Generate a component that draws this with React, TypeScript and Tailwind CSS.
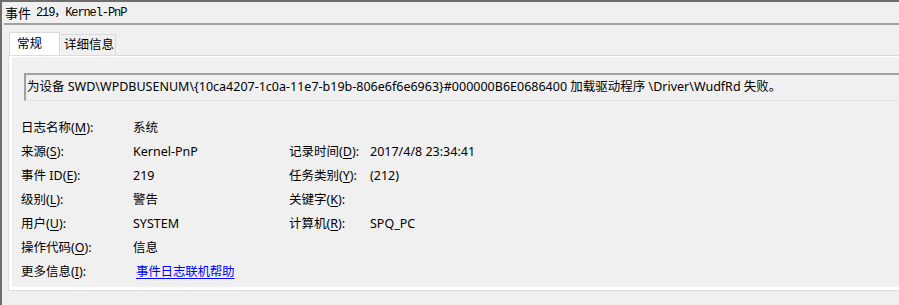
import React from "react";

const cjk = { fontFamily: '"Segoe UI", "Noto Sans", "Noto Sans CJK SC", sans-serif' };

const DESC =
  "为设备 SWD\\WPDBUSENUM\\{10ca4207-1c0a-11e7-b19b-806e6f6e6963}#000000B6E0686400 加载驱动程序 \\Driver\\WudfRd 失败。";

function L({ text, k }: { text: string; k: string }) {
  return (
    <span>
      {text}(<span className="underline underline-offset-2">{k}</span>):
    </span>
  );
}

function Row({ label, k, value, label2, k2, value2, link }: any) {
  return (
    <div className="flex h-[24px] items-center">
      <div className="w-[112px] shrink-0">
        <L text={label} k={k} />
      </div>
      <div className="w-[156px] shrink-0">
        {link ? (
          <span className="ml-[3px] text-[#0000ff] underline underline-offset-2 tracking-[-0.2px]">{value}</span>
        ) : (
          value
        )}
      </div>
      {label2 && (
        <>
          <div className="w-[81px] shrink-0">
            <L text={label2} k={k2} />
          </div>
          <div>{value2}</div>
        </>
      )}
    </div>
  );
}

export default function App() {
  return (
    <div
      className="w-[899px] h-[305px] overflow-hidden bg-[#f0f0f0] text-black border-l-2 border-t-2 border-[#6f6f6f] text-[12.5px]"
      style={cjk}
    >
      <div className="h-[21px] flex items-center pl-[3px] text-[13px]">
        <span style={{ fontFamily: '"Noto Sans CJK SC", sans-serif' }}>事件</span>
        <span
          className="ml-[5px] text-[12px] tracking-[-1.1px]"
          style={{ fontFamily: '"Liberation Mono", "Noto Sans CJK SC", monospace' }}
        >
          219，Kernel-PnP
        </span>
      </div>
      <div className="ml-[2px] h-[2px] bg-[#a0a0a0]" />
      <div className="pl-[7px] pt-[7px]">
        <div className="flex items-end h-[24px]">
          <div className="h-[24px] w-[51px] bg-white border border-b-0 border-[#d9d9d9] pl-[7px] pt-[2px]">
            常规
          </div>
          <div className="h-[22px] w-[56px] bg-[#f0f0f0] border border-l-0 border-b-0 border-[#d9d9d9] pl-[4px] pt-[1px]">
            详细信息
          </div>
        </div>
        <div className="h-[234px] border-l-[3px] border-t border-b-[3px] border-white bg-[#f0f0f0] outline outline-1 outline-[#dcdcdc]">
          <div className="pt-[16px] pl-[12px]">
            <div className="h-[28px] border border-t-2 border-l-2 border-t-[#a0a0a0] border-l-[#a0a0a0] border-r-0 border-b-[#e3e3e3] bg-[#f0f0f0] flex items-center pl-[1px] whitespace-nowrap">
              {DESC}
            </div>
            <div className="mt-[15px] -ml-[3px]">
              <Row label="日志名称" k="M" value="系统" />
              <Row label="来源" k="S" value="Kernel-PnP" label2="记录时间" k2="D" value2="2017/4/8 23:34:41" />
              <Row label="事件 ID" k="E" value="219" label2="任务类别" k2="Y" value2="(212)" />
              <Row label="级别" k="L" value="警告" label2="关键字" k2="K" value2="" />
              <Row label="用户" k="U" value="SYSTEM" label2="计算机" k2="R" value2="SPQ_PC" />
              <Row label="操作代码" k="O" value="信息" />
              <Row label="更多信息" k="I" value="事件日志联机帮助" link />
            </div>
          </div>
        </div>
      </div>
    </div>
  );
}
